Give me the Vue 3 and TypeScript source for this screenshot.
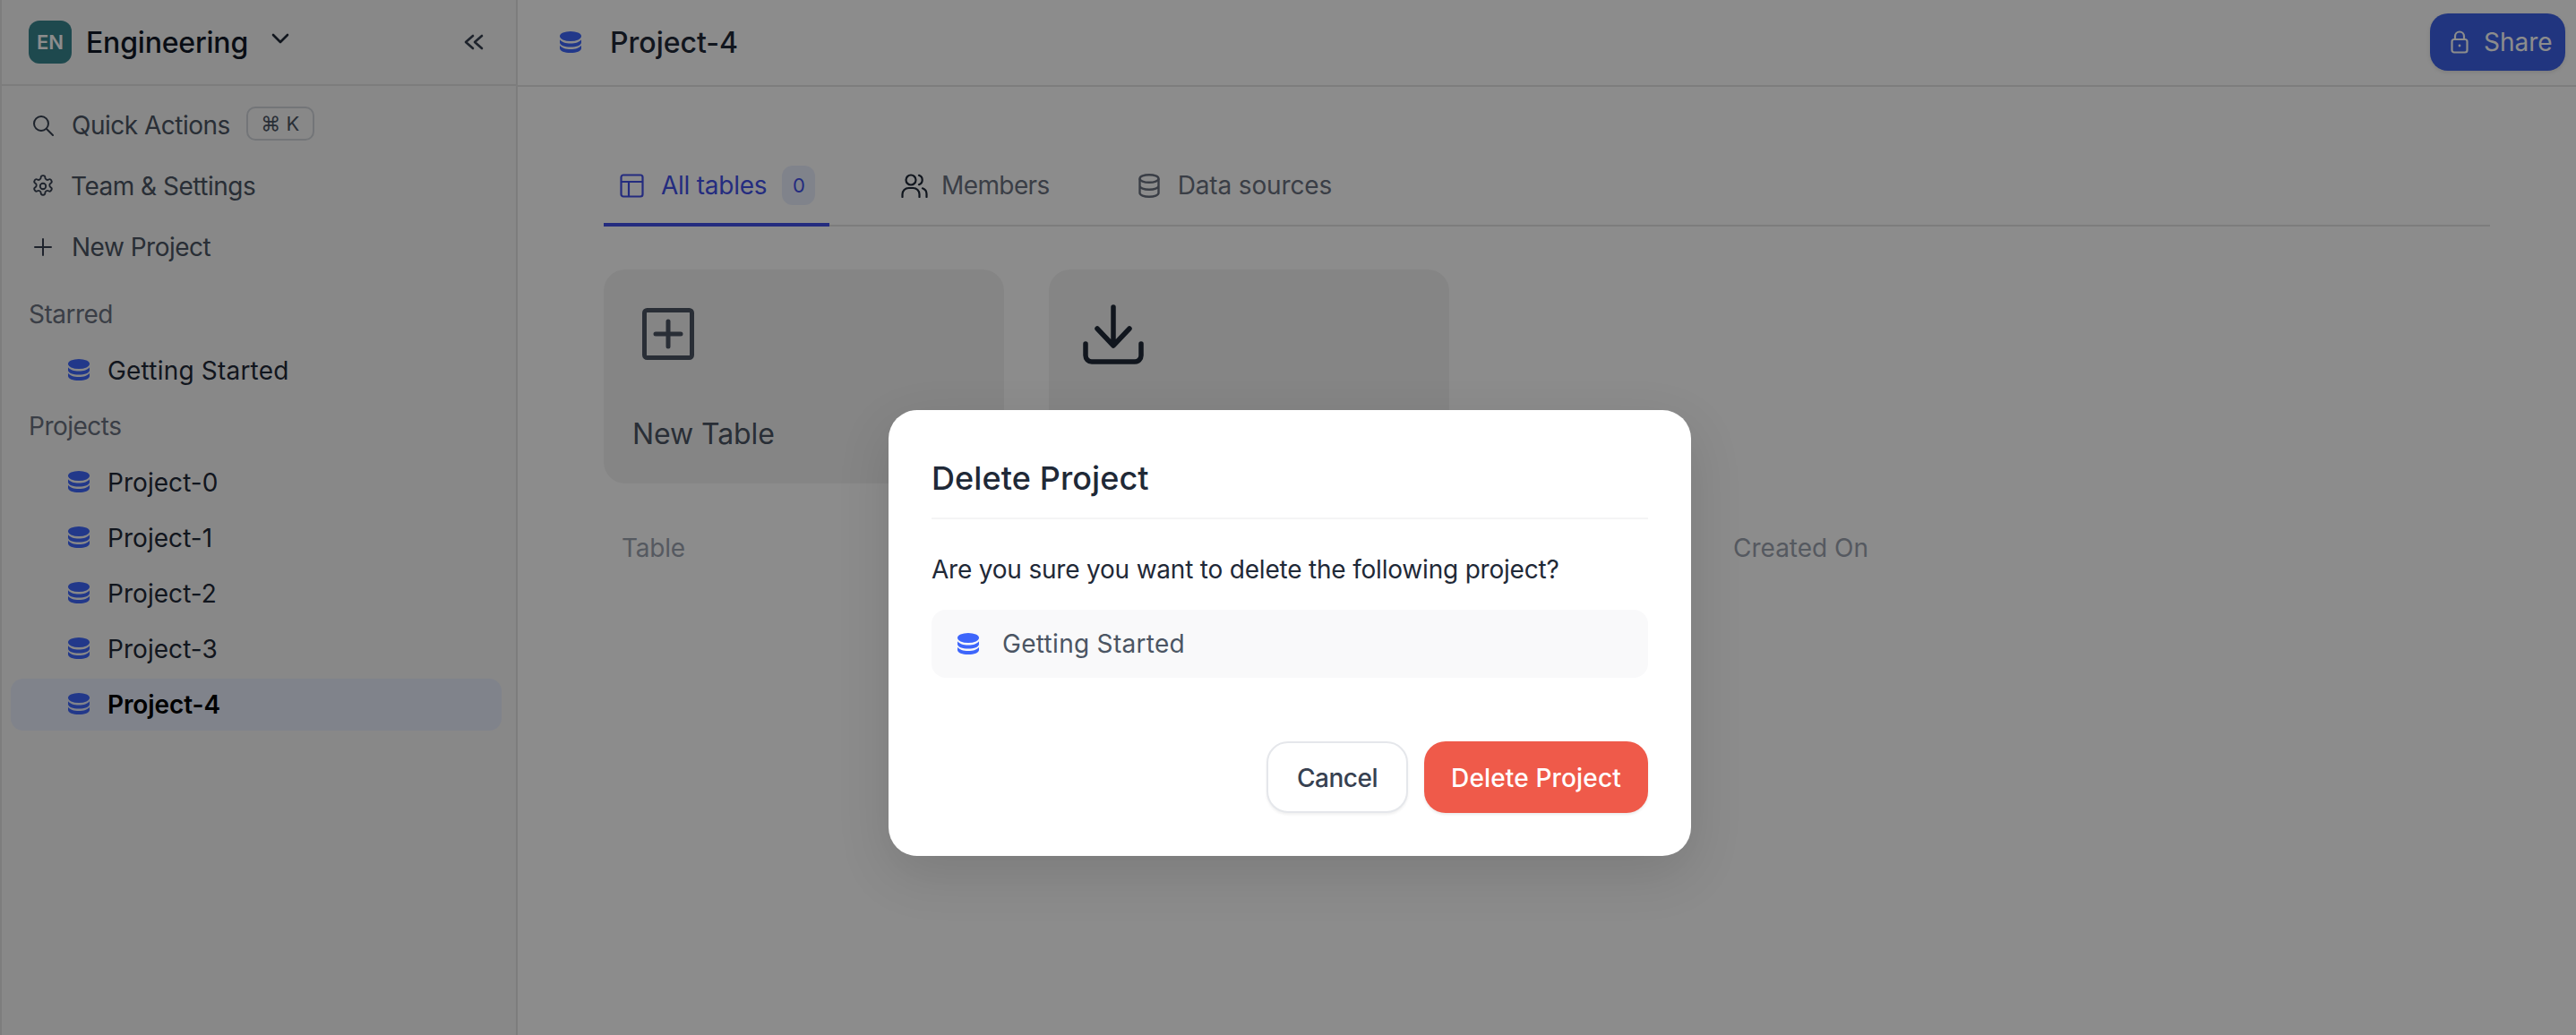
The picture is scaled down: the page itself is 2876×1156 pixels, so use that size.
<script setup lang="ts">
const projects = ['Project-0', 'Project-1', 'Project-2', 'Project-3', 'Project-4']
</script>

<template>
  <div class="page">
    <aside class="sidebar">
      <div class="workspace">
        <span class="avatar">EN</span>
        <span class="ws-name">Engineering</span>
        <svg class="chev" viewBox="0 0 20 14" fill="none" stroke="currentColor" stroke-width="2.6" stroke-linecap="round" stroke-linejoin="round"><path d="M2 3l8 8 8-8" /></svg>
        <svg class="collapse" viewBox="0 0 22 18" fill="none" stroke="currentColor" stroke-width="2.6" stroke-linecap="round" stroke-linejoin="round"><path d="M10 2l-8 7 8 7M20 2l-8 7 8 7" /></svg>
      </div>
      <div class="nav">
        <div class="nav-row">
          <svg class="nav-ic" viewBox="0 0 24 24" fill="none" stroke="currentColor" stroke-width="2" stroke-linecap="round"><circle cx="10" cy="10" r="8" /><path d="M16 16l7 7" /></svg>
          <span>Quick Actions</span>
          <span class="kbd">⌘ K</span>
        </div>
        <div class="nav-row">
          <svg class="nav-ic gear" viewBox="0 0 24 24" fill="none" stroke="currentColor" stroke-width="1.700" stroke-linecap="round" stroke-linejoin="round"><path d="M12.200 1h-.4a2 2 0 0 0-2 2v.2a2 2 0 0 1-1 1.700l-.4.3a2 2 0 0 1-2 0l-.2-.1a2 2 0 0 0-2.700.7l-.2.4a2 2 0 0 0 .7 2.700l.2.1a2 2 0 0 1 1 1.700v.6a2 2 0 0 1-1 1.700l-.2.1a2 2 0 0 0-.7 2.700l.2.4a2 2 0 0 0 2.700.7l.2-.1a2 2 0 0 1 2 0l.4.3a2 2 0 0 1 1 1.700v.2a2 2 0 0 0 2 2h.4a2 2 0 0 0 2-2v-.2a2 2 0 0 1 1-1.700l.4-.3a2 2 0 0 1 2 0l.2.1a2 2 0 0 0 2.700-.7l.2-.4a2 2 0 0 0-.7-2.700l-.2-.1a2 2 0 0 1-1-1.700v-.6a2 2 0 0 1 1-1.700l.2-.1a2 2 0 0 0 .7-2.700l-.2-.4a2 2 0 0 0-2.700-.7l-.2.1a2 2 0 0 1-2 0l-.4-.3a2 2 0 0 1-1-1.700V3a2 2 0 0 0-2-2z" /><circle cx="12" cy="12" r="3" /></svg>
          <span>Team &amp; Settings</span>
        </div>
        <div class="nav-row">
          <svg class="nav-ic" viewBox="0 0 24 24" fill="none" stroke="currentColor" stroke-width="2" stroke-linecap="round"><path d="M12 3v18M3 12h18" /></svg>
          <span>New Project</span>
        </div>
      </div>
      <div class="group starred">Starred</div>
      <div class="project first">
        <svg class="db" viewBox="0 0 24 24" fill="currentColor"><ellipse cx="12" cy="5.500" rx="12" ry="5.500" /><path d="M0 9.200v3.300C0 15.500 5.400 17.500 12 17.500s12-2 12-5v-3.300c-2 2.700-6.500 4.300-12 4.300S2 11.900 0 9.200z" /><path d="M0 15.700V19c0 3 5.400 5 12 5s12-2 12-5v-3.300c-2 2.700-6.500 4.300-12 4.300S2 18.400 0 15.700z" /></svg>
        <span>Getting Started</span>
      </div>
      <div class="group">Projects</div>
      <div class="projects">
        <div v-for="p in projects" :key="p" class="project" :class="{ active: p === 'Project-4' }">
          <svg class="db" viewBox="0 0 24 24" fill="currentColor"><ellipse cx="12" cy="5.500" rx="12" ry="5.500" /><path d="M0 9.200v3.300C0 15.500 5.400 17.500 12 17.500s12-2 12-5v-3.300c-2 2.700-6.500 4.300-12 4.300S2 11.900 0 9.200z" /><path d="M0 15.700V19c0 3 5.400 5 12 5s12-2 12-5v-3.300c-2 2.700-6.500 4.300-12 4.300S2 18.400 0 15.700z" /></svg>
          <span>{{ p }}</span>
        </div>
      </div>
    </aside>
    <main class="main">
      <header class="topbar">
        <svg class="db top-db" viewBox="0 0 24 24" fill="currentColor"><ellipse cx="12" cy="5.500" rx="12" ry="5.500" /><path d="M0 9.200v3.300C0 15.500 5.400 17.500 12 17.500s12-2 12-5v-3.300c-2 2.700-6.500 4.300-12 4.300S2 11.900 0 9.200z" /><path d="M0 15.700V19c0 3 5.400 5 12 5s12-2 12-5v-3.300c-2 2.700-6.500 4.300-12 4.300S2 18.400 0 15.700z" /></svg>
        <span class="top-title">Project-4</span>
        <button class="share">
          <svg class="lock" viewBox="0 0 20 26" fill="none" stroke="currentColor" stroke-width="2.200" stroke-linejoin="round"><rect x="1.500" y="10" width="17" height="14.500" rx="2.500" /><path d="M5 10V6.500a5 5 0 0 1 10 0V10" /><circle cx="10" cy="17" r="1.400" fill="currentColor" stroke="none" /></svg>
          Share
        </button>
      </header>
      <div class="content">
        <div class="tabs">
          <div class="tab on">
            <svg class="tab-ic" viewBox="0 0 27 27" fill="none" stroke="currentColor" stroke-width="2.200"><rect x="1.500" y="1.500" width="24" height="24" rx="2.500" /><path d="M1.500 9h24M10 9v16.500" /></svg>
            <span>All tables</span>
            <span class="badge">0</span>
          </div>
          <div class="tab members">
            <svg class="tab-ic" viewBox="0 0 30 27" fill="none" stroke="currentColor" stroke-width="2.200" stroke-linecap="round"><circle cx="11" cy="7" r="5.500" /><path d="M1.500 26v-3a7 7 0 0 1 7-7h5a7 7 0 0 1 7 7v3M20 1.800a5.500 5.500 0 0 1 0 10.400M24 16.300a7 7 0 0 1 4.500 6.700v3" /></svg>
            <span>Members</span>
          </div>
          <div class="tab sources">
            <svg class="tab-ic" viewBox="0 0 24 27" fill="none" stroke="currentColor" stroke-width="2.400"><ellipse cx="12" cy="5.500" rx="10.500" ry="4.300" /><path d="M1.500 5.500v16c0 2.400 4.700 4.300 10.500 4.300s10.500-1.900 10.500-4.300v-16M1.500 13.500c0 2.400 4.700 4.300 10.500 4.300s10.500-1.900 10.500-4.300" /></svg>
            <span>Data sources</span>
          </div>
        </div>
        <div class="cards">
          <div class="card">
            <svg class="card-plus" viewBox="0 0 58 58" fill="none" stroke="currentColor" stroke-width="5" stroke-linecap="round" stroke-linejoin="round"><rect x="2.500" y="2.500" width="53" height="53" rx="3" /><path d="M29 15v28M15 29h28" /></svg>
            <span class="card-label">New Table</span>
          </div>
          <div class="card">
            <svg class="card-dl" viewBox="0 0 68 68" fill="none" stroke="currentColor" stroke-width="5.500" stroke-linecap="round" stroke-linejoin="round"><path d="M34 3v42M16 27l18 19 18-19M3 44v13a7 7 0 0 0 7 7h48a7 7 0 0 0 7-7V44" /></svg>
          </div>
        </div>
        <div class="thead">
          <span>Table</span>
          <span class="created">Created On</span>
        </div>
      </div>
    </main>
    <div class="overlay">
      <div class="modal">
        <div class="m-title">Delete Project</div>
        <div class="m-text">Are you sure you want to delete the following project?</div>
        <div class="m-item">
          <svg class="db m-db" viewBox="0 0 24 24" fill="currentColor"><ellipse cx="12" cy="5.500" rx="12" ry="5.500" /><path d="M0 9.200v3.300C0 15.500 5.400 17.500 12 17.500s12-2 12-5v-3.300c-2 2.700-6.500 4.300-12 4.300S2 11.900 0 9.200z" /><path d="M0 15.700V19c0 3 5.400 5 12 5s12-2 12-5v-3.300c-2 2.700-6.500 4.300-12 4.300S2 18.400 0 15.700z" /></svg>
          <span>Getting Started</span>
        </div>
        <div class="m-actions">
          <button class="btn cancel">Cancel</button>
          <button class="btn danger">Delete Project</button>
        </div>
      </div>
    </div>
  </div>
</template>

<style>
html, body { margin: 0; background: #fff; overflow: hidden; }
</style>

<style scoped>
.page {
  position: relative;
  display: flex;
  width: 2876px;
  height: 1156px;
  overflow: hidden;
  background: #fff;
  color: #1f2937;
  font-family: Inter, "Noto Sans", sans-serif;
  font-size: 28px;
  letter-spacing: -0.5px;
}
svg { display: block; flex: none; }
.sidebar {
  width: 574px;
  flex: none;
  background: #f8f8f8;
  border-left: 2px solid #e3e3e3;
  border-right: 2px solid #e3e3e3;
  margin-right: -2px;
}
.workspace {
  height: 96px;
  box-sizing: border-box;
  border-bottom: 2px solid #e3e3e3;
  display: flex;
  align-items: center;
  padding: 0 0 0 30px;
  margin-right: -2px;
}
.avatar {
  width: 48px;
  height: 48px;
  border-radius: 12px;
  background: #38858f;
  color: #fff;
  font-size: 22px;
  font-weight: 600;
  letter-spacing: 0;
  display: flex;
  align-items: center;
  justify-content: center;
}
.ws-name { margin-left: 16px; font-size: 32px; font-weight: 500; color: #111827; letter-spacing: -0.2px; width: 207px; }
.chev { width: 20px; height: 14px; margin-top: -8px; color: #1f2937; }
.collapse { width: 22px; height: 18px; margin-left: 195px; color: #374151; }
.nav { padding-top: 10px; }
.nav-row { height: 68px; display: flex; align-items: center; padding-left: 34px; gap: 20px; color: #4b5563; }
.nav-ic { width: 24px; height: 24px; color: #374151; }
.gear { width: 26px; height: 26px; margin-right: -2px; margin-left: -1px; }
.kbd {
  margin-left: -2px;
  width: 76px;
  height: 38px;
  box-sizing: border-box;
  border: 2px solid #d1d5db;
  border-radius: 10px;
  font-size: 22px;
  color: #4b5563;
  letter-spacing: 0;
  display: flex;
  align-items: center;
  justify-content: center;
  margin-top: -4px;
}
.group { height: 34px; line-height: 34px; padding-left: 30px; color: #6b7280; margin-top: 16px; }
.starred { margin-top: 24px; }
.project {
  height: 58px;
  display: flex;
  align-items: center;
  gap: 20px;
  padding-left: 64px;
  margin: 0 16px 4px 10px;
  border-radius: 14px;
  color: #1f2937;
  letter-spacing: 0.05px;
}
.project.first { margin-top: 17px; letter-spacing: 0.2px; }
.projects { padding-top: 17px; }
.project.active { background: #e9eefe; color: #000; font-weight: 600; letter-spacing: -0.1px; }
.project .db { margin-top: -2px; }
.db { width: 24px; height: 24px; color: #3e66fb; }
.main { flex: 1; min-width: 0; display: flex; flex-direction: column; }
.topbar {
  height: 97px;
  box-sizing: border-box;
  border-bottom: 2px solid #e3e3e3;
  display: flex;
  align-items: center;
  padding: 0 12px 0 49px;
}
.top-db { margin-top: -2px; }
.top-title { margin-left: 32px; font-size: 32px; font-weight: 500; color: #1f2937; letter-spacing: 0; }
.share {
  margin-left: auto;
  margin-top: -1px;
  width: 151px;
  height: 64px;
  border: none;
  border-radius: 20px;
  background: #3c62e8;
  color: #fff;
  font: inherit;
  letter-spacing: 0;
  display: flex;
  align-items: center;
  padding: 0 0 0 23px;
  gap: 17px;
  box-shadow: 0 2px 4px rgba(0,0,0,.1);
}
.lock { width: 20px; height: 26px; }
.content { padding: 64px 96px 0 98px; }
.tabs { display: flex; height: 92px; box-sizing: border-box; border-bottom: 2px solid #e3e3e3; }
.tab { display: flex; align-items: center; height: 90px; box-sizing: border-box; padding-top: 2px; color: #6b7280; letter-spacing: -0.15px; }
.tab span { display: block; }
.tab-ic { width: 27px; height: 27px; }
.tab.on { width: 252px; padding-left: 18px; padding-top: 4px; gap: 19px; color: #4351e8; border-bottom: 4px solid #4351e8; height: 92px; margin-bottom: -2px; letter-spacing: -0.25px; }
.badge {
  width: 37px;
  height: 44px;
  border-radius: 12px;
  background: #e9eefe;
  display: flex !important;
  align-items: center;
  justify-content: center;
  font-size: 22px;
  margin-left: -2px;
}
.members { margin-left: 80px; gap: 15px; letter-spacing: -0.6px; }
.members .tab-ic { width: 30px; color: #1f2937; }
.sources { margin-left: 99px; gap: 20px; }
.sources .tab-ic { width: 24px; }
.cards { display: flex; gap: 50px; margin-top: 48px; }
.card {
  width: 447px;
  height: 239px;
  box-sizing: border-box;
  background: #f3f3f3;
  border-radius: 24px;
  padding: 40px 32px 0 32px;
  display: flex;
  flex-direction: column;
}
.card-plus { width: 58px; height: 58px; margin: 3px 0 0 11px; color: #4b5563; }
.card-label { margin-top: 63px; font-size: 32px; font-weight: 400; color: #4b5563; letter-spacing: -0.1px; }
.card-dl { width: 68px; height: 68px; margin: -1px 0 0 6px; color: #1f2937; }
.thead { display: flex; margin-top: 55px; padding-left: 20px; color: #9ca3af; height: 34px; line-height: 34px; letter-spacing: -0.2px; }
.created { margin-left: 1170px; letter-spacing: 0; }
.overlay {
  position: absolute;
  inset: 0;
  background: rgba(0, 0, 0, 0.45);
  display: flex;
  align-items: flex-start;
  padding: 458px 0 0 992px;
  box-sizing: border-box;
}
.modal {
  width: 896px;
  height: 498px;
  box-sizing: border-box;
  background: #fff;
  border-radius: 32px;
  padding: 48px;
  box-shadow: 0 20px 60px rgba(0,0,0,.12);
  display: flex;
  flex-direction: column;
}
.m-title { height: 72px; line-height: 56px; font-size: 36px; font-weight: 500; color: #1f2937; border-bottom: 2px solid #f4f4f5; letter-spacing: 0.1px; }
.m-text { margin-top: 36px; line-height: 40px; color: #1f2937; letter-spacing: -0.2px; }
.m-item {
  margin-top: 25px;
  height: 76px;
  background: #f9f9fa;
  border-radius: 16px;
  display: flex;
  align-items: center;
  gap: 26px;
  padding-left: 29px;
  color: #4b5563;
  letter-spacing: 0.3px;
}
.m-db { color: #3e66fb; }
.m-actions { margin-top: auto; display: flex; justify-content: flex-end; gap: 18px; }
.btn { height: 80px; border-radius: 24px; font: inherit; font-weight: 500; box-sizing: border-box; letter-spacing: -0.5px; padding-top: 2px; }
.cancel { width: 158px; background: #fff; border: 2px solid #e5e7eb; color: #374151; box-shadow: 0 2px 3px rgba(0,0,0,.06); }
.danger { width: 250px; background: #ef5a4a; border: none; color: #fff; box-shadow: 0 2px 3px rgba(0,0,0,.08); letter-spacing: 0.15px; }
</style>
